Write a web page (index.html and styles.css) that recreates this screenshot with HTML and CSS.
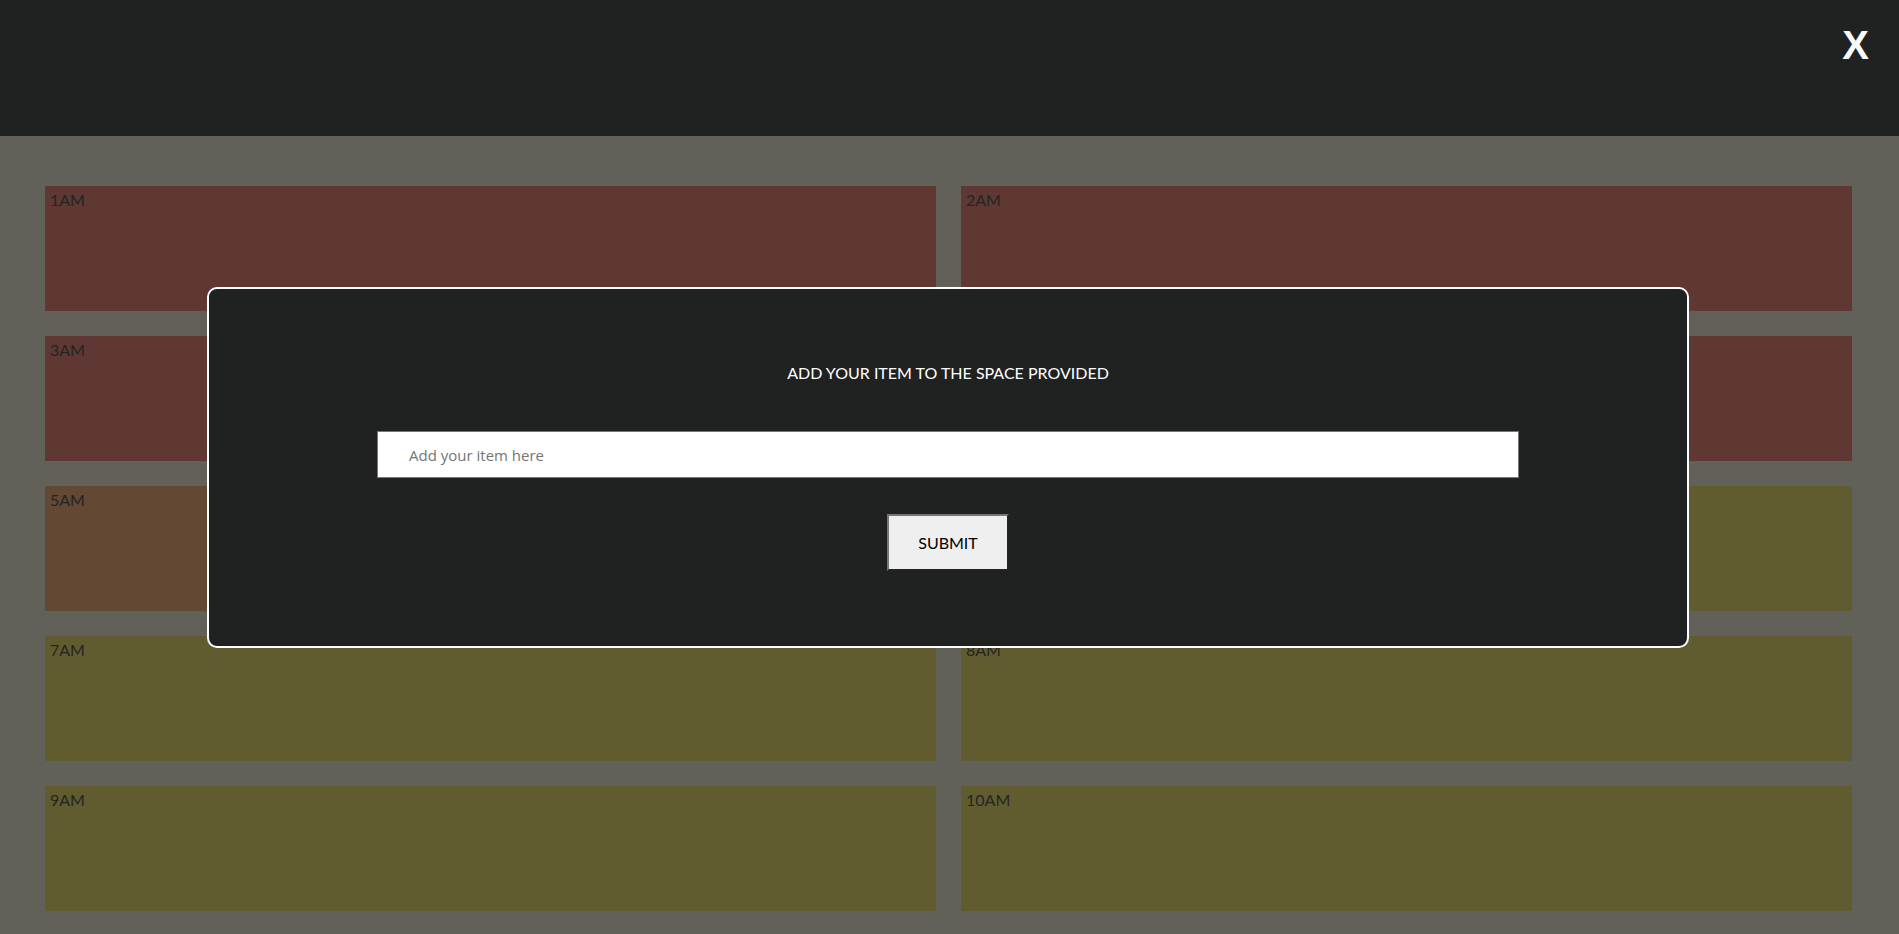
FILE: index.html
```html
<!DOCTYPE html>
<html lang="en">
<head>
<meta charset="utf-8">
<title>Day Planner</title>
<link rel="stylesheet" href="styles.css">
</head>
<body>
<header class="topbar">
  <span class="close">X</span>
</header>
<main class="planner">
  <div class="slot past"><span class="hour">1AM</span></div>
  <div class="slot past"><span class="hour">2AM</span></div>
  <div class="slot past"><span class="hour">3AM</span></div>
  <div class="slot past"><span class="hour">4AM</span></div>
  <div class="slot present"><span class="hour">5AM</span></div>
  <div class="slot future"><span class="hour">6AM</span></div>
  <div class="slot future"><span class="hour">7AM</span></div>
  <div class="slot future"><span class="hour">8AM</span></div>
  <div class="slot future"><span class="hour">9AM</span></div>
  <div class="slot future"><span class="hour">10AM</span></div>
</main>
<div class="modal">
  <p class="modal-title">ADD YOUR ITEM TO THE SPACE PROVIDED</p>
  <input class="modal-input" type="text" placeholder="Add your item here">
  <button class="modal-submit" type="button">SUBMIT</button>
</div>
</body>
</html>
```
FILE: styles.css
```css
html, body {
  margin: 0;
  padding: 0;
}
body {
  background: #61615a;
  font-family: Lato, "Open Sans", sans-serif;
  overflow: hidden;
  height: 934px;
}
.topbar {
  height: 136px;
  box-sizing: border-box;
  background: #202221;
  display: flex;
  justify-content: flex-end;
  align-items: flex-start;
  padding: 25px 30px 0 0;
}
.close {
  font-family: "Liberation Sans", Arial, sans-serif;
  font-weight: bold;
  font-size: 40px;
  line-height: 40px;
  color: #fafafa;
}
.planner {
  display: grid;
  grid-template-columns: 891px 891px;
  grid-auto-rows: 125px;
  column-gap: 25px;
  row-gap: 25px;
  padding: 50px 47px 0 45px;
}
.slot {
  padding: 4px 5px;
  box-sizing: border-box;
}
.hour {
  font-family: Lato, sans-serif;
  font-size: 16px;
  color: #222524;
}
.past { background: #5f3833; }
.present { background: #634834; }
.future { background: #615c2f; }

.modal {
  position: absolute;
  left: 207px;
  top: 287px;
  width: 1482px;
  height: 361px;
  box-sizing: border-box;
  border: 2px solid #ffffff;
  border-radius: 10px;
  background: #202221;
  display: flex;
  flex-direction: column;
  align-items: center;
  padding: 74px 0 75px;
}
.modal-title {
  margin: 0 0 49px;
  font-family: Lato, sans-serif;
  font-size: 16px;
  line-height: 19px;
  color: #ffffff;
}
.modal-input {
  width: 1142px;
  height: 47px;
  box-sizing: border-box;
  margin: 0;
  border: 1px solid #767676;
  border-radius: 0;
  background: #ffffff;
  padding: 0 31px;
  font-family: "Open Sans", "Noto Sans", sans-serif;
  font-size: 15px;
  color: #222;
  outline: none;
}
.modal-input::placeholder {
  color: #757575;
}
.modal-submit {
  margin-top: 36px;
  width: 122px;
  height: 57px;
  box-sizing: border-box;
  padding: 0;
  border-style: solid;
  border-width: 2px;
  border-color: #767676 #222423 #222423 #767676;
  background: #efefef;
  font-family: Lato, sans-serif;
  font-size: 16px;
  color: #000;
}
```
